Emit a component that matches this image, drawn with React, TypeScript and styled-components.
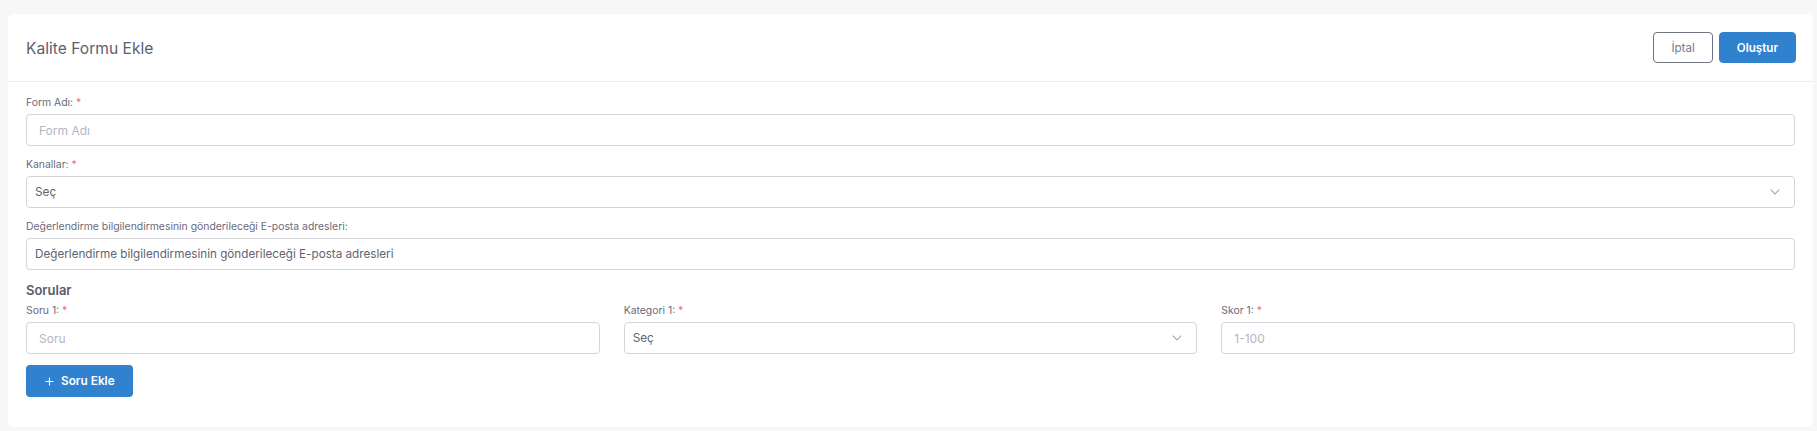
import React from "react";
import styled, { createGlobalStyle } from "styled-components";

const GlobalStyle = createGlobalStyle`
  html, body {
    margin: 0;
    padding: 0;
    background: #f7f7f8;
    font-family: Inter, "Noto Sans", sans-serif;
  }
  * { box-sizing: border-box; }
`;

const Page = styled.div`
  padding: 14px 4px 4px 8px;
`;

const Card = styled.div`
  background: #ffffff;
  border-radius: 6px;
  height: 413px;
  display: flex;
  flex-direction: column;
`;

const Header = styled.div`
  height: 68px;
  display: flex;
  align-items: center;
  justify-content: space-between;
  padding: 0 17px 0 18px;
  border-bottom: 1px solid #ececf1;
`;

const Title = styled.h1`
  margin: 0;
  font-size: 15.6px;
  font-weight: 400;
  color: #60606f;
  padding-top: 1px;
`;

const Actions = styled.div`
  display: flex;
  gap: 6px;
`;

const Button = styled.button<{ $variant: "outline" | "primary" }>`
  height: 31px;
  border-radius: 4px;
  font-family: Inter, sans-serif;
  font-size: 11.6px;
  padding: 0 ${(p) => (p.$variant === "primary" ? "17px" : "17px")};
  cursor: pointer;
  border: 1px solid ${(p) => (p.$variant === "primary" ? "#3182ce" : "#6f7280")};
  background: ${(p) => (p.$variant === "primary" ? "#3182ce" : "#ffffff")};
  color: ${(p) => (p.$variant === "primary" ? "#ffffff" : "#74788d")};
  font-weight: ${(p) => (p.$variant === "primary" ? 600 : 400)};
`;

const Body = styled.div`
  padding: 12px 18px 0 18px;
  display: flex;
  flex-direction: column;
`;

const Field = styled.div`
  display: flex;
  flex-direction: column;
  margin-bottom: 10px;
`;

const Label = styled.label`
  font-size: 10.4px;
  line-height: 17px;
  color: #6a6a7a;
  margin-bottom: 3px;
`;

const Star = styled.span`
  color: #f46a6a;
`;

const Input = styled.input<{ $dark?: boolean }>`
  height: 32px;
  width: 100%;
  border: 1px solid #d4d4da;
  border-radius: 4px;
  font-family: Inter, sans-serif;
  font-size: ${(p) => (p.$dark ? "11.7px" : "12px")};
  color: #495057;
  padding: 0 ${(p) => (p.$dark ? "8px" : "12px")};
  outline: none;
  background: #fff;
  &::placeholder {
    color: ${(p) => (p.$dark ? "#62636f" : "#b5b5c0")};
  }
`;

const SelectBox = styled.div`
  height: 32px;
  border: 1px solid #d4d4da;
  border-radius: 4px;
  display: flex;
  align-items: center;
  justify-content: space-between;
  padding: 0 14px 0 8px;
  font-size: 11.8px;
  color: #62636f;
`;

const Chevron = () => (
  <svg width="10" height="6" viewBox="0 0 10 6" fill="none">
    <polyline points="0.7,0.7 5,5 9.3,0.7" stroke="#a8a8b0" strokeWidth="1.1" />
  </svg>
);

const Section = styled.h2`
  margin: 0 0 2px 0;
  font-size: 13px;
  line-height: 20px;
  font-weight: 600;
  color: #5b5b6c;
`;

const Grid = styled.div`
  display: grid;
  grid-template-columns: repeat(3, 1fr);
  gap: 24px;
`;

const AddButton = styled.button`
  align-self: flex-start;
  margin-top: 1px;
  height: 32px;
  padding: 0 18px 0 19px;
  display: flex;
  align-items: center;
  gap: 7px;
  border: none;
  border-radius: 4px;
  background: #3182ce;
  color: #fff;
  font-family: Inter, sans-serif;
  font-size: 11.8px;
  font-weight: 600;
  cursor: pointer;
`;

const Plus = () => (
  <svg width="9" height="9" viewBox="0 0 9 9">
    <path d="M4.5 0.5v8M0.5 4.5h8" stroke="#fff" strokeWidth="1.1" />
  </svg>
);

export default function App() {
  return (
    <>
      <GlobalStyle />
      <Page>
        <Card>
          <Header>
            <Title>Kalite Formu Ekle</Title>
            <Actions>
              <Button $variant="outline">İptal</Button>
              <Button $variant="primary">Oluştur</Button>
            </Actions>
          </Header>
          <Body>
            <Field>
              <Label>
                Form Adı: <Star>*</Star>
              </Label>
              <Input placeholder="Form Adı" />
            </Field>
            <Field>
              <Label>
                Kanallar: <Star>*</Star>
              </Label>
              <SelectBox>
                <span>Seç</span>
                <Chevron />
              </SelectBox>
            </Field>
            <Field>
              <Label>Değerlendirme bilgilendirmesinin gönderileceği E-posta adresleri:</Label>
              <Input $dark placeholder="Değerlendirme bilgilendirmesinin gönderileceği E-posta adresleri" />
            </Field>
            <Section>Sorular</Section>
            <Grid>
              <Field>
                <Label>
                  Soru 1: <Star>*</Star>
                </Label>
                <Input placeholder="Soru" />
              </Field>
              <Field>
                <Label>
                  Kategori 1: <Star>*</Star>
                </Label>
                <SelectBox>
                  <span>Seç</span>
                  <Chevron />
                </SelectBox>
              </Field>
              <Field>
                <Label>
                  Skor 1: <Star>*</Star>
                </Label>
                <Input placeholder="1-100" />
              </Field>
            </Grid>
            <AddButton>
              <Plus />
              Soru Ekle
            </AddButton>
          </Body>
        </Card>
      </Page>
    </>
  );
}
